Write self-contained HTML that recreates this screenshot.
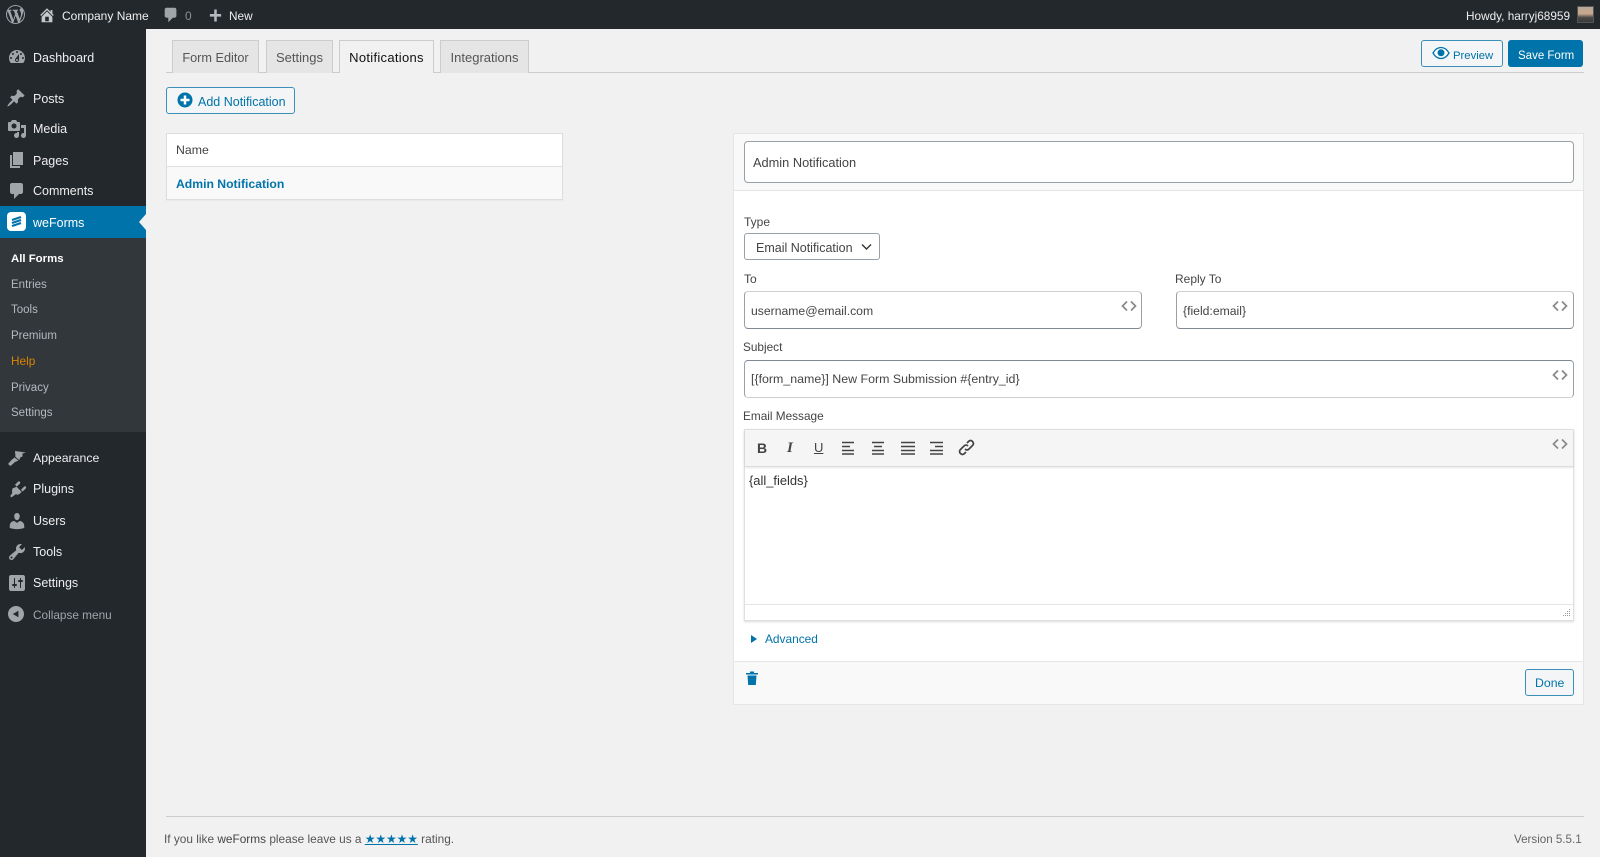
<!DOCTYPE html>
<html><head><meta charset="utf-8"><style>
*{box-sizing:border-box}
html,body{margin:0;padding:0;width:1600px;height:857px;overflow:hidden;background:#f1f1f1;font-family:"Liberation Sans",sans-serif;font-size:13px;color:#444}
.a,.t,svg{position:absolute}
.t{white-space:nowrap;line-height:16px}
.m{color:#eee;left:33px;font-size:12.500px}
.s{color:#b4b9be;left:11px;font-size:11.500px}
.i{fill:#a0a5aa}
.tab{position:absolute;top:40px;height:33px;background:#e5e5e5;border:1px solid #ccc;border-bottom:0;text-align:center;line-height:33px;color:#555;font-size:13px}
.box{position:absolute;background:#fff;border:1px solid #98a1a8;border-radius:4px}
.l{color:#444;font-size:12px}
.code{fill:none;stroke:#888;stroke-width:1.700}
.tb{fill:none;stroke:#444;stroke-width:1.500}
</style></head><body>
<div class="a" style="left:0;top:0;width:1600px;height:29px;background:#23282d"></div>
<div class="a" style="left:0;top:29px;width:146px;height:828px;background:#23282d"></div>
<div class="a" style="left:0;top:206px;width:146px;height:32px;background:#0073aa"></div>
<div class="a" style="left:0;top:238px;width:146px;height:194px;background:#32373c"></div>
<div class="a" style="left:139px;top:214px;width:0;height:0;border:8px solid transparent;border-left:0;border-right:7px solid #f1f1f1"></div>

<svg style="left:6px;top:5px" width="19" height="19" viewBox="0 0 20 20" fill="#a0a5aa"><path d="M20 10c0-5.510-4.490-10-10-10C4.480 0 0 4.490 0 10c0 5.520 4.480 10 10 10 5.510 0 10-4.480 10-10zM7.780 15.370L4.370 6.220c.55-.020 1.170-.080 1.170-.080.5-.060.44-1.130-.060-1.110 0 0-1.450.110-2.370.110-.18 0-.37 0-.58-.010C4.120 2.690 6.870 1.110 10 1.110c2.330 0 4.450.87 6.050 2.340-.68-.110-1.650.39-1.650 1.580 0 .74.45 1.360.9 2.100.35.61.55 1.360.55 2.460 0 1.490-1.400 5-1.400 5l-3.030-8.370c.54-.020.82-.17.82-.17.5-.050.44-1.250-.060-1.220 0 0-1.440.12-2.380.12-.87 0-2.330-.12-2.330-.12-.5-.030-.56 1.200-.060 1.220l.92.080 1.260 3.410zM17.410 10c.24-.64.74-1.870.43-4.250.7 1.290 1.050 2.710 1.050 4.250 0 3.290-1.730 6.240-4.400 7.780.97-2.590 1.940-5.200 2.920-7.780zM6.100 18.090C3.120 16.650 1.110 13.530 1.110 10c0-1.300.23-2.480.72-3.590C3.250 10.300 4.670 14.200 6.100 18.090zm4.030-6.630l2.580 6.980c-.86.29-1.760.45-2.710.45-.79 0-1.570-.11-2.290-.33.81-2.380 1.620-4.740 2.420-7.100z"/></svg>
<svg style="left:38px;top:6px" width="18" height="18" viewBox="0 0 20 20" fill="#c4c8cc"><path d="M16 8.500l1.530 1.530-1.060 1.060L10 4.620l-6.470 6.470-1.060-1.060L10 2.500l4 4v-2h2v4zm-6-2.460l6 5.990V18H4v-5.970zM12 17v-5H8v5h4z"/></svg>
<div class="t" style="left:62px;top:8px;color:#eee;font-size:12px">Company Name</div>
<svg style="left:162px;top:6px" width="18" height="18" viewBox="0 0 20 20" class="i"><path d="M5 2h9c1.100 0 2 .9 2 2v7c0 1.100-.9 2-2 2h-2l-5 5v-5H5c-1.100 0-2-.9-2-2V4c0-1.100.9-2 2-2z"/></svg>
<div class="t" style="left:185px;top:8px;color:#8a8f94;font-size:12px">0</div>
<svg style="left:208px;top:8px" width="15" height="15" viewBox="0 0 20 20" fill="#b4b9be"><path d="M17.500 8v3.500H11.700V18H8.300v-6.500H2.500V8h5.800V2h3.400v6z"/></svg>
<div class="t" style="left:229px;top:8px;color:#eee;font-size:11.800px">New</div>
<div class="t" style="left:1466px;top:8px;color:#eee;font-size:11.800px">Howdy, harryj68959</div>
<div class="a" style="left:1577px;top:6px;width:17px;height:17px;border:1px solid #555;background:linear-gradient(#b8a898 0,#c9a78e 45%,#4a4a4a 70%,#3a3a3a 100%)"></div>

<svg style="left:7px;top:47px" width="20" height="20" viewBox="0 0 20 20" class="i"><path d="M3.760 16h12.480c1.100-1.370 1.760-3.110 1.760-5 0-4.420-3.580-8-8-8s-8 3.580-8 8c0 1.890.66 3.630 1.760 5zM10 4c.55 0 1 .45 1 1s-.45 1-1 1-1-.45-1-1 .45-1 1-1zM6 6c.55 0 1 .45 1 1s-.45 1-1 1-1-.45-1-1 .45-1 1-1zm8 0c.55 0 1 .45 1 1s-.45 1-1 1-1-.45-1-1 .45-1 1-1zm-5.370 5.550L12 7v6c0 1.100-.9 2-2 2s-2-.9-2-2c0-.57.24-1.080.63-1.450zM4 10c.55 0 1 .45 1 1s-.45 1-1 1-1-.45-1-1 .45-1 1-1zm12 0c.55 0 1 .45 1 1s-.45 1-1 1-1-.45-1-1 .45-1 1-1zm-5 3c0-.55-.45-1-1-1s-1 .45-1 1 .45 1 1 1 1-.45 1-1z"/></svg>
<div class="t m" style="top:50px">Dashboard</div>
<svg style="left:6px;top:88px" width="20" height="20" viewBox="0 0 20 20" class="i"><path d="M10.440 3.020l1.820-1.820 6.360 6.350-1.830 1.820c-1.050-.68-2.480-.57-3.410.36l-.75.75c-.92.93-1.040 2.350-.35 3.410l-1.830 1.820-2.410-2.410-2.800 2.790c-.42.42-3.380 2.710-3.800 2.290s1.860-3.390 2.280-3.810l2.790-2.790L4.100 9.360l1.830-1.820c1.050.69 2.480.57 3.400-.36l.75-.75c.93-.92 1.050-2.350.36-3.410z"/></svg>
<div class="t m" style="top:91px">Posts</div>
<svg style="left:7px;top:119px" width="20" height="20" viewBox="0 0 20 20" class="i"><path d="M13 11V4c0-.55-.45-1-1-1h-1.670L9 1H5L3.670 3H2c-.55 0-1 .45-1 1v7c0 .55.45 1 1 1h10c.55 0 1-.45 1-1zM7 4.500c1.380 0 2.500 1.120 2.500 2.500S8.380 9.500 7 9.500 4.500 8.380 4.500 7 5.620 4.500 7 4.500zM14 6h5v10.500c0 1.380-1.120 2.500-2.500 2.500S14 17.880 14 16.500s1.120-2.500 2.500-2.500c.17 0 .34.020.5.050V9h-3V6zm-4 8.050V13h2v3.500c0 1.380-1.120 2.500-2.500 2.500S7 17.880 7 16.500 8.120 14 9.500 14c.17 0 .34.020.5.050z"/></svg>
<div class="t m" style="top:121px">Media</div>
<svg style="left:7px;top:150px" width="20" height="20" viewBox="0 0 20 20" class="i"><path d="M6 15V2h10v13H6zm-1 1h8v2H3V5h2v11z"/></svg>
<div class="t m" style="top:153px">Pages</div>
<svg style="left:7px;top:181px" width="20" height="20" viewBox="0 0 20 20" class="i"><path d="M5 2h9c1.100 0 2 .9 2 2v7c0 1.100-.9 2-2 2h-2l-5 5v-5H5c-1.100 0-2-.9-2-2V4c0-1.100.9-2 2-2z"/></svg>
<div class="t m" style="top:183px">Comments</div>
<div class="a" style="left:7px;top:212px;width:19px;height:19px;border-radius:4px;background:#fff"></div>
<svg style="left:7px;top:212px" width="19" height="19" viewBox="0 0 19 19" fill="none" stroke="#0073aa" stroke-width="2.200"><path d="M5 8l9-3M5 11l9-3M5 14l9-3"/></svg>
<div class="t m" style="top:215px;color:#fff">weForms</div>

<div class="t s" style="top:251px;color:#fff;font-weight:bold;font-size:11.400px">All Forms</div>
<div class="t s" style="top:277px">Entries</div>
<div class="t s" style="top:302px">Tools</div>
<div class="t s" style="top:328px">Premium</div>
<div class="t s" style="top:353px;color:#d98500;font-size:11.800px">Help</div>
<div class="t s" style="top:380px">Privacy</div>
<div class="t s" style="top:405px">Settings</div>

<svg style="left:7px;top:448px" width="20" height="20" viewBox="0 0 20 20" class="i"><path d="M8 3l11 1.500-3.500 1v3l-2 .8-1.300 2.700L8.500 9 8 3zM7.500 9.500l4 3-3.500 1.500-4.500 4-2.500-2 3.500-4 3-2.500z"/></svg>
<div class="t m" style="top:450px;font-size:12.300px">Appearance</div>
<svg style="left:7px;top:479px" width="20" height="20" viewBox="0 0 20 20" class="i"><path d="M13.110 4.360L9.870 7.600 8 5.730l3.240-3.240c.35-.34 1.050-.25 1.540.24.49.49.58 1.190.33 1.630zm-8.380 5.340l4.890-1.890 3.040 3.040 2 2-1.890 1.890c-1.300 1.300-3.210.8-4.050.47l-4.220 3.220-1.310-1.310 2.220-3.220c-.34-.84-.84-2.710.32-4.200zm9.240 1l3.240-3.240c.35-.35 1.050-.25 1.540.24s.59 1.190.24 1.540l-3.240 3.240z"/></svg>
<div class="t m" style="top:481px">Plugins</div>
<svg style="left:7px;top:511px" width="20" height="20" viewBox="0 0 20 20" class="i"><path d="M10 9.250c-2.270 0-2.730-3.440-2.730-3.440C7 4.020 7.820 2 9.970 2c2.160 0 2.980 2.020 2.710 3.810 0 0-.41 3.440-2.680 3.440zm0 2.570L12.720 10c2.390 0 4.520 2.330 4.520 4.530v2.490s-3.650 1.130-7.240 1.130c-3.650 0-7.240-1.130-7.240-1.130v-2.490c0-2.250 1.940-4.480 4.470-4.480z"/></svg>
<div class="t m" style="top:513px">Users</div>
<svg style="left:7px;top:542px" width="20" height="20" viewBox="0 0 20 20" class="i"><path d="M16.680 9.770c-1.340 1.340-3.300 1.670-4.950.99l-5.410 6.520c-.99.99-2.590.99-3.580 0s-.99-2.590 0-3.570l6.520-5.420c-.68-1.650-.35-3.610.99-4.950 1.280-1.280 3.120-1.620 4.720-1.060l-2.890 2.890 2.820 2.820 2.860-2.870c.53 1.590.19 3.400-1.080 4.670zM3.810 16.210c.4.39 1.030.39 1.420 0 .4-.4.4-1.030 0-1.420-.39-.4-1.020-.4-1.420 0-.39.39-.39 1.020 0 1.420z"/></svg>
<div class="t m" style="top:544px">Tools</div>
<svg style="left:7px;top:573px" width="20" height="20" viewBox="0 0 20 20" class="i"><path d="M18 16V4c0-1.100-.9-2-2-2H4c-1.100 0-2 .9-2 2v12c0 1.100.9 2 2 2h12c1.100 0 2-.9 2-2zM8 11h1c.55 0 1 .45 1 1s-.45 1-1 1H8v1.500c0 .28-.22.5-.5.5s-.5-.22-.5-.5V13H6c-.55 0-1-.45-1-1s.45-1 1-1h1V5.500c0-.28.22-.5.5-.5s.5.22.5.5V11zm5-2h-1c-.55 0-1-.45-1-1s.45-1 1-1h1V5.500c0-.28.22-.5.5-.5s.5.22.5.5V7h1c.55 0 1 .45 1 1s-.45 1-1 1h-1v5.500c0 .28-.22.5-.5.5s-.5-.22-.5-.5V9z"/></svg>
<div class="t m" style="top:575px">Settings</div>
<svg style="left:8px;top:606px" width="16" height="16" viewBox="0 0 20 20" class="i"><path d="M10 20c5.520 0 10-4.480 10-10S15.520 0 10 0 0 4.480 0 10s4.480 10 10 10zm3-14v8l-7-4z"/></svg>
<div class="t m" style="top:607px;color:#a0a5aa;font-size:11.800px">Collapse menu</div>

<div class="a" style="left:166px;top:72px;width:1418px;height:1px;background:#ccc"></div>
<div class="tab" style="left:172px;width:87px;font-size:12.700px;line-height:34px">Form Editor</div>
<div class="tab" style="left:266px;width:67px">Settings</div>
<div class="tab" style="left:339px;width:95px;background:#f1f1f1;color:#111;letter-spacing:.3px">Notifications</div>
<div class="tab" style="left:440px;width:89px">Integrations</div>

<div class="a" style="left:166px;top:87px;width:129px;height:27px;border:1px solid #3b8fb8;border-radius:3px;background:#f3f5f6"></div>
<svg style="left:177px;top:92px" width="16" height="16" viewBox="0 0 16 16"><circle cx="8" cy="8" r="7.500" fill="#0073aa"/><path d="M8 3.500v9M3.500 8h9" stroke="#fff" stroke-width="2.500"/></svg>
<div class="t" style="left:198px;top:94px;color:#0073aa;font-size:12.500px">Add Notification</div>

<div class="a" style="left:1421px;top:40px;width:82px;height:27px;border:1px solid #3b8fb8;border-radius:3px;background:#f3f5f6"></div>
<svg style="left:1432px;top:46px" width="18" height="14" viewBox="0 0 18 14"><path d="M1 7c2-3.500 5-5.500 8-5.500S15 3.500 17 7c-2 3.500-5 5.500-8 5.500S3 10.500 1 7z" fill="#fff" stroke="#0073aa" stroke-width="1.300"/><circle cx="9" cy="6.800" r="3.500" fill="#0073aa"/></svg>
<div class="t" style="left:1453px;top:48px;color:#0073aa;font-size:11.300px">Preview</div>
<div class="a" style="left:1508px;top:40px;width:75px;height:27px;border-radius:3px;background:#0073aa"></div>
<div class="t" style="left:1518px;top:48px;color:#fff;font-size:11.500px">Save Form</div>

<div class="a" style="left:166px;top:133px;width:397px;height:67px;background:#fff;border:1px solid #ddd;box-shadow:0 1px 1px rgba(0,0,0,.04)"></div>
<div class="a" style="left:167px;top:166px;width:395px;height:33px;background:#f9f9f9;border-top:1px solid #e1e1e1"></div>
<div class="t" style="left:176px;top:142px;color:#444;font-size:12.300px">Name</div>
<div class="t" style="left:176px;top:176px;color:#0073aa;font-weight:bold;font-size:12.200px">Admin Notification</div>

<div class="a" style="left:733px;top:133px;width:851px;height:572px;background:#fff;border:1px solid #e5e5e5"></div>
<div class="a" style="left:734px;top:134px;width:849px;height:57px;background:#f9f9f9;border-bottom:1px solid #e5e5e5"></div>
<div class="box" style="left:744px;top:141px;width:830px;height:42px"></div>
<div class="t" style="left:753px;top:155px;color:#444;font-size:12.800px">Admin Notification</div>

<div class="t l" style="left:744px;top:214px">Type</div>
<div class="box" style="left:744px;top:233px;width:136px;height:27px;border-radius:3px"></div>
<div class="t" style="left:756px;top:240px;color:#444;font-size:12.500px">Email Notification</div>
<svg style="left:861px;top:243px" width="11" height="8" viewBox="0 0 11 8" fill="none" stroke="#333" stroke-width="1.400"><path d="M1 1.500l4.500 4.500L10 1.500"/></svg>

<div class="t l" style="left:744px;top:271px">To</div>
<div class="box" style="left:744px;top:291px;width:398px;height:38px;border-color:#ccd0d4 #98a1a8 #7e8993"></div>
<div class="t" style="left:751px;top:303px;color:#444;font-size:12.200px">username@email.com</div>
<svg class="code" style="left:1121px;top:300px" width="16" height="12" viewBox="0 0 16 12"><path d="M6 1.500L1.500 6 6 10.500M10 1.500L14.500 6 10 10.500"/></svg>

<div class="t l" style="left:1175px;top:271px">Reply To</div>
<div class="box" style="left:1176px;top:291px;width:398px;height:38px;border-color:#ccd0d4 #98a1a8 #7e8993"></div>
<div class="t" style="left:1183px;top:303px;color:#444;font-size:12.200px">{field:email}</div>
<svg class="code" style="left:1552px;top:300px" width="16" height="12" viewBox="0 0 16 12"><path d="M6 1.500L1.500 6 6 10.500M10 1.500L14.500 6 10 10.500"/></svg>

<div class="t l" style="left:743px;top:339px;font-size:11.800px">Subject</div>
<div class="box" style="left:744px;top:360px;width:830px;height:38px;border-color:#7e8993 #98a1a8 #ccd0d4"></div>
<div class="t" style="left:751px;top:371px;color:#444;font-size:12.400px">[{form_name}] New Form Submission #{entry_id}</div>
<svg class="code" style="left:1552px;top:369px" width="16" height="12" viewBox="0 0 16 12"><path d="M6 1.500L1.500 6 6 10.500M10 1.500L14.500 6 10 10.500"/></svg>

<div class="t l" style="left:743px;top:408px;font-size:11.800px">Email Message</div>
<div class="a" style="left:744px;top:429px;width:830px;height:192px;background:#fff;border:1px solid #e0e0e0;box-shadow:0 1px 2px rgba(0,0,0,.15)"></div>
<div class="a" style="left:745px;top:430px;width:828px;height:37px;background:#f5f5f5;border-bottom:1px solid #ddd;box-shadow:0 1px 2px rgba(0,0,0,.1)"></div>
<div class="a" style="left:745px;top:604px;width:828px;height:1px;background:#e5e5e5"></div>
<div class="t" style="left:757px;top:440px;color:#444;font-weight:bold;font-size:14px">B</div>
<div class="t" style="left:787px;top:440px;color:#444;font-style:italic;font-weight:bold;font-size:15px;font-family:'Liberation Serif',serif">I</div>
<div class="t" style="left:814px;top:440px;color:#444;font-size:13px;text-decoration:underline">U</div>
<svg class="tb" style="left:841px;top:441px" width="110" height="14" viewBox="0 0 110 14">
<path d="M1 1.500h12M1 5.500h8M1 9.500h12M1 13h12M31 1.500h12M33 5.500h8M31 9.500h12M31 13h12M60 1.500h14M60 5.500h14M60 9.500h14M60 13h14M89 1.500h13M94 5.500h8M89 9.500h13M89 13h13"/></svg>
<svg style="left:958px;top:439px" width="17" height="17" viewBox="0 0 17 17" fill="none" stroke="#444" stroke-width="1.700"><path d="M7 10c1.500 1.500 3 1 4 0l3.500-3.500c1.300-1.300 1.200-2.700 0-4s-2.700-1.300-4 0L9 4M10 7C8.500 5.500 7 6 6 7L2.500 10.500c-1.300 1.300-1.200 2.700 0 4s2.700 1.300 4 0L8 13"/></svg>
<svg class="code" style="left:1552px;top:438px" width="16" height="12" viewBox="0 0 16 12"><path d="M6 1.500L1.500 6 6 10.500M10 1.500L14.500 6 10 10.500"/></svg>
<div class="t" style="left:749px;top:473px;color:#333;font-size:12.900px">{all_fields}</div>
<svg style="left:1562px;top:608px" width="9" height="10" viewBox="0 0 9 10" fill="#999"><path d="M7 1h1v1H7zM7 3h1v1H7zM5 3h1v1H5zM7 5h1v1H7zM5 5h1v1H5zM3 5h1v1H3zM7 7h1v1H7zM5 7h1v1H5zM3 7h1v1H3zM1 7h1v1H1z"/></svg>

<svg style="left:751px;top:635px" width="6" height="8" viewBox="0 0 6 8" fill="#0073aa"><path d="M0 0l6 4-6 4z"/></svg>
<div class="t" style="left:765px;top:631px;color:#0073aa;font-size:11.900px">Advanced</div>

<div class="a" style="left:734px;top:661px;width:849px;height:43px;background:#f9f9f9;border-top:1px solid #e5e5e5"></div>
<svg style="left:745px;top:670px" width="14" height="16" viewBox="0 0 14 16" fill="#0073aa"><path d="M1 3h12v1.500H1zM5 1.500h4V3H5zM2.500 5.500h9L10.800 15H3.200z"/></svg>
<div class="a" style="left:1525px;top:669px;width:49px;height:27px;border:1px solid #3b8fb8;border-radius:3px;background:#f3f5f6"></div>
<div class="t" style="left:1535px;top:675px;color:#0073aa;font-size:12.300px">Done</div>

<div class="a" style="left:166px;top:816px;width:1418px;height:1px;background:#ccc"></div>
<div class="t" style="left:164px;top:831px;color:#555;font-size:11.850px">If you like <span style="color:#444">weForms</span> please leave us a <span style="color:#0073aa;text-decoration:underline">★★★★★</span> rating.</div>
<div class="t" style="left:1514px;top:832px;color:#666;font-size:11.600px">Version 5.5.1</div>
</body></html>
